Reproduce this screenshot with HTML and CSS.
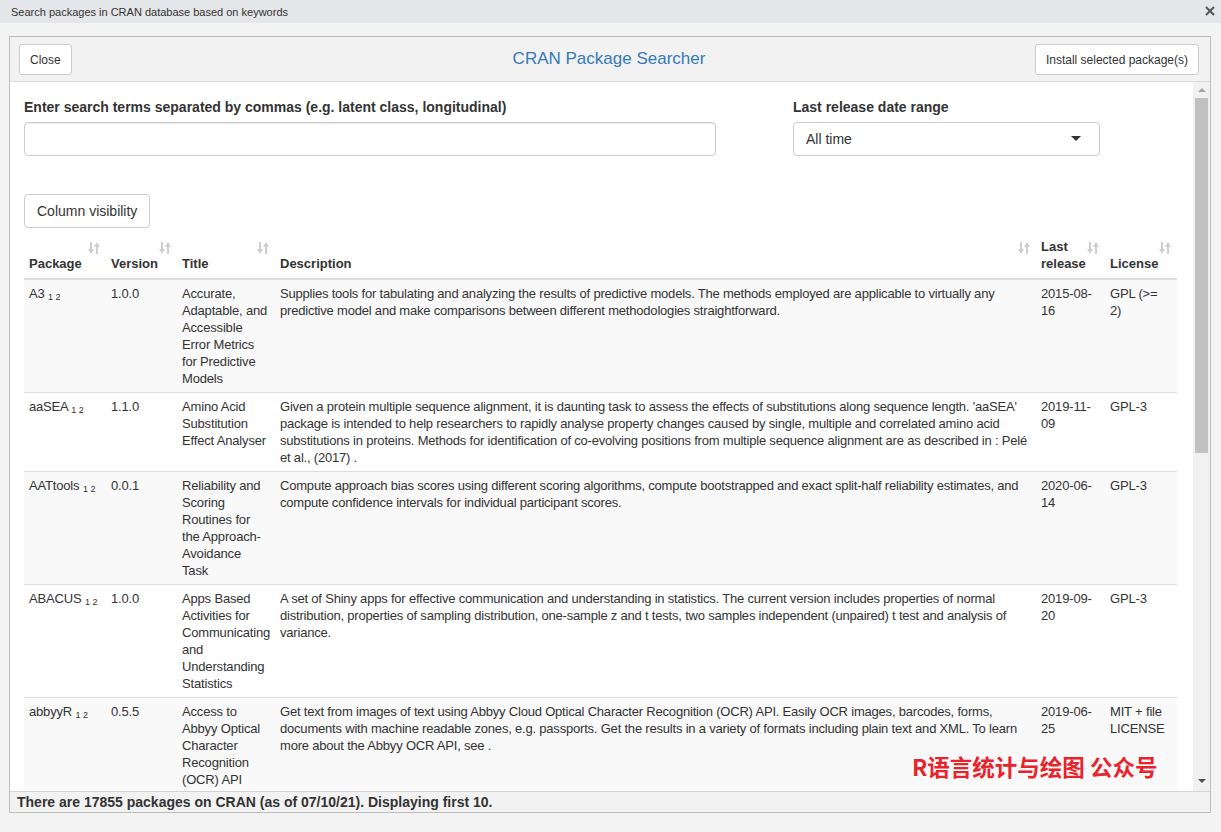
FILE: index.html
```html
<!DOCTYPE html>
<html>
<head>
<meta charset="utf-8">
<title>CRAN Package Searcher</title>
<link rel="stylesheet" href="styles.css">
</head>
<body>
<div class="topbar">
  <span class="topbar-title">Search packages in CRAN database based on keywords</span>
  <svg class="topbar-close" width="10" height="10" viewBox="0 0 10 10"><path d="M1 1 L9 9 M9 1 L1 9" stroke="#555" stroke-width="2" fill="none"/></svg>
</div>

<div class="panel">
  <div class="panel-header">
    <div class="hdr-left"><button class="btn btn-sm">Close</button></div>
    <div class="hdr-title">CRAN Package Searcher</div>
    <div class="hdr-right"><button class="btn btn-sm">Install selected package(s)</button></div>
  </div>

  <div class="panel-body">
    <div class="scroll-content">
      <div class="form-row">
        <div class="form-group search-group">
          <label class="ctl-label">Enter search terms separated by commas (e.g. latent class, longitudinal)</label>
          <div class="text-input"></div>
        </div>
        <div class="form-group date-group">
          <label class="ctl-label">Last release date range</label>
          <div class="select-input"><span>All time</span><span class="caret"></span></div>
        </div>
      </div>

      <button class="btn btn-md colvis">Column visibility</button>

      <table class="dt">
        <colgroup>
          <col style="width:82px"><col style="width:71px"><col style="width:98px"><col style="width:761px"><col style="width:69px"><col style="width:72px">
        </colgroup>
        <thead>
          <tr>
            <th>Package<span class="sort"></span></th>
            <th>Version<span class="sort"></span></th>
            <th>Title<span class="sort"></span></th>
            <th>Description<span class="sort"></span></th>
            <th>Last release<span class="sort"></span></th>
            <th>License<span class="sort"></span></th>
          </tr>
        </thead>
        <tbody>
          <tr class="odd">
            <td>A3 <sub>1 2</sub></td>
            <td>1.0.0</td>
            <td>Accurate, Adaptable, and Accessible Error Metrics for Predictive Models</td>
            <td class="desc">Supplies tools for tabulating and analyzing the results of predictive models. The methods employed are applicable to virtually any predictive model and make comparisons between different methodologies straightforward.</td>
            <td>2015-08-16</td>
            <td>GPL (&gt;= 2)</td>
          </tr>
          <tr>
            <td>aaSEA <sub>1 2</sub></td>
            <td>1.1.0</td>
            <td>Amino Acid Substitution Effect Analyser</td>
            <td class="desc">Given a protein multiple sequence alignment, it is daunting task to assess the effects of substitutions along sequence length. 'aaSEA' package is intended to help researchers to rapidly analyse property changes caused by single, multiple and correlated amino acid substitutions in proteins. Methods for identification of co-evolving positions from multiple sequence alignment are as described in : Pelé et al., (2017) .</td>
            <td>2019-11-09</td>
            <td>GPL-3</td>
          </tr>
          <tr class="odd">
            <td>AATtools <sub>1 2</sub></td>
            <td>0.0.1</td>
            <td>Reliability and Scoring Routines for the Approach-Avoidance Task</td>
            <td class="desc">Compute approach bias scores using different scoring algorithms, compute bootstrapped and exact split-half reliability estimates, and compute confidence intervals for individual participant scores.</td>
            <td>2020-06-14</td>
            <td>GPL-3</td>
          </tr>
          <tr>
            <td>ABACUS <sub>1 2</sub></td>
            <td>1.0.0</td>
            <td>Apps Based Activities for Communicating and Understanding Statistics</td>
            <td class="desc">A set of Shiny apps for effective communication and understanding in statistics. The current version includes properties of normal distribution, properties of sampling distribution, one-sample z and t tests, two samples independent (unpaired) t test and analysis of variance.</td>
            <td>2019-09-20</td>
            <td>GPL-3</td>
          </tr>
          <tr class="odd">
            <td>abbyyR <sub>1 2</sub></td>
            <td>0.5.5</td>
            <td>Access to Abbyy Optical Character Recognition (OCR) API</td>
            <td class="desc">Get text from images of text using Abbyy Cloud Optical Character Recognition (OCR) API. Easily OCR images, barcodes, forms, documents with machine readable zones, e.g. passports. Get the results in a variety of formats including plain text and XML. To learn more about the Abbyy OCR API, see .</td>
            <td>2019-06-25</td>
            <td>MIT + file LICENSE</td>
          </tr>
        </tbody>
      </table>
    </div>
    <div class="vscroll">
      <span class="arrow-up"></span>
      <div class="thumb-track"><div class="thumb"></div></div>
      <span class="arrow-down"></span>
    </div>
  </div>

  <div class="panel-footer">There are 17855 packages on CRAN (as of 07/10/21). Displaying first 10.</div>
</div>

<div class="watermark">R语言统计与绘图 公众号</div>
</body>
</html>
```

FILE: styles.css
```css
* { box-sizing: border-box; }

html, body {
  margin: 0;
  padding: 0;
}

body {
  width: 1221px;
  height: 832px;
  background: #f2f3f2;
  font-family: "Liberation Sans", Arial, sans-serif;
  color: #333;
  position: relative;
  overflow: hidden;
}

.topbar {
  height: 23px;
  background: #e5e6e9;
  display: flex;
  align-items: center;
  justify-content: space-between;
  padding: 0 6px 0 11px;
  font-size: 11px;
  color: #333;
}

.topbar-close { display: block; margin-top: -2px; }

.panel {
  margin: 13px 0 0 9px;
  width: 1202px;
  height: 777px;
  border: 1px solid #bdbdbd;
  display: flex;
  flex-direction: column;
  background: #fff;
}

.panel-header {
  height: 45px;
  flex: none;
  background: #f2f2f2;
  border-bottom: 1px solid #dcdcdc;
  display: grid;
  grid-template-columns: 1fr auto 1fr;
  align-items: center;
  padding: 1px 11px 0 9px;
}

.hdr-right { justify-self: end; }

.hdr-title {
  font-size: 17px;
  color: #337ab7;
  margin-top: -1px;
}

.btn {
  font-family: "Liberation Sans", Arial, sans-serif;
  background: #fff;
  border: 1px solid #ccc;
  color: #333;
  cursor: pointer;
  display: inline-block;
}

.btn-sm {
  font-size: 12px;
  line-height: 18px;
  height: 31px;
  padding: 5px 10px;
  border-radius: 3px;
}

.btn-md {
  font-size: 14px;
  line-height: 20px;
  height: 34px;
  padding: 6px 12px;
  border-radius: 4px;
}

.panel-body {
  flex: 1;
  display: flex;
  overflow: hidden;
  position: relative;
}

.scroll-content {
  flex: 1;
  padding: 15px 14px 0 14px;
  overflow: hidden;
}

.form-row {
  display: flex;
  gap: 77px;
}

.search-group { width: 692px; }
.date-group { width: 307px; }

.ctl-label {
  display: block;
  font-size: 14px;
  font-weight: bold;
  line-height: 20px;
  margin-bottom: 5px;
}

.text-input,
.select-input {
  height: 34px;
  border: 1px solid #ccc;
  border-radius: 4px;
  background: #fff;
  box-shadow: inset 0 1px 1px rgba(0,0,0,0.075);
}

.select-input {
  display: flex;
  align-items: center;
  justify-content: space-between;
  padding: 0 18px 0 12px;
  font-size: 14px;
  color: #333;
  box-shadow: none;
}

.caret {
  width: 0;
  height: 0;
  border-left: 5px solid transparent;
  border-right: 5px solid transparent;
  border-top: 5px solid #333;
  margin-top: -1px;
}

.colvis {
  margin-top: 38px;
}

.dt {
  margin-top: 6px;
  border-collapse: collapse;
  table-layout: fixed;
  width: 1153px;
  font-size: 13px;
  line-height: 17px;
}

.dt th {
  position: relative;
  text-align: left;
  vertical-align: bottom;
  font-weight: bold;
  padding: 4px 5px 6px 5px;
  border-bottom: 2px solid #ddd;
}

.sort {
  position: absolute;
  top: 8px;
  right: 6px;
  width: 12px;
  height: 12px;
  background:
    linear-gradient(#cfcfcf, #cfcfcf) 2px 0 / 2px 8px no-repeat,
    linear-gradient(#cfcfcf, #cfcfcf) 8px 4px / 2px 8px no-repeat;
}
.sort::before,
.sort::after {
  content: "";
  position: absolute;
  width: 0;
  height: 0;
  border-left: 3px solid transparent;
  border-right: 3px solid transparent;
}
.sort::before {
  left: 0;
  top: 7px;
  border-top: 5px solid #cfcfcf;
}
.sort::after {
  left: 6px;
  top: 0;
  border-bottom: 5px solid #cfcfcf;
}

.dt td {
  vertical-align: top;
  padding: 5px;
  letter-spacing: -0.17px;
}

.dt td.desc {
  letter-spacing: -0.2px;
}

.dt tbody tr + tr td {
  border-top: 1px solid #ddd;
}

.dt tr.odd td { background: #f9f9f9; }

.dt sub {
  font-size: 9px;
  vertical-align: -2px;
  line-height: 0;
  letter-spacing: 0;
}

.vscroll {
  width: 17px;
  flex: none;
  background: #f1f1f1;
  display: flex;
  flex-direction: column;
  align-items: center;
  padding: 6px 0 6px;
}

.arrow-up {
  width: 0; height: 0;
  border-left: 4px solid transparent;
  border-right: 4px solid transparent;
  border-bottom: 4px solid #a3a3a3;
}

.thumb-track {
  flex: 1;
  width: 100%;
  padding: 6px 2px 0;
}

.thumb {
  height: 355px;
  background: #c1c1c1;
}

.arrow-down {
  width: 0; height: 0;
  border-left: 4px solid transparent;
  border-right: 4px solid transparent;
  border-top: 4px solid #505050;
  margin-bottom: 2px;
}

.panel-footer {
  height: 21px;
  flex: none;
  background: #f2f2f2;
  border-top: 1px solid #d4d4d4;
  font-size: 14px;
  font-weight: bold;
  line-height: 20px;
  padding-left: 7px;
}

.watermark {
  position: absolute;
  left: 912px;
  top: 752px;
  font-family: "Noto Sans CJK SC", "Liberation Sans", sans-serif;
  font-size: 22.5px;
  font-weight: bold;
  line-height: 28px;
  color: #e8232b;
}
```
